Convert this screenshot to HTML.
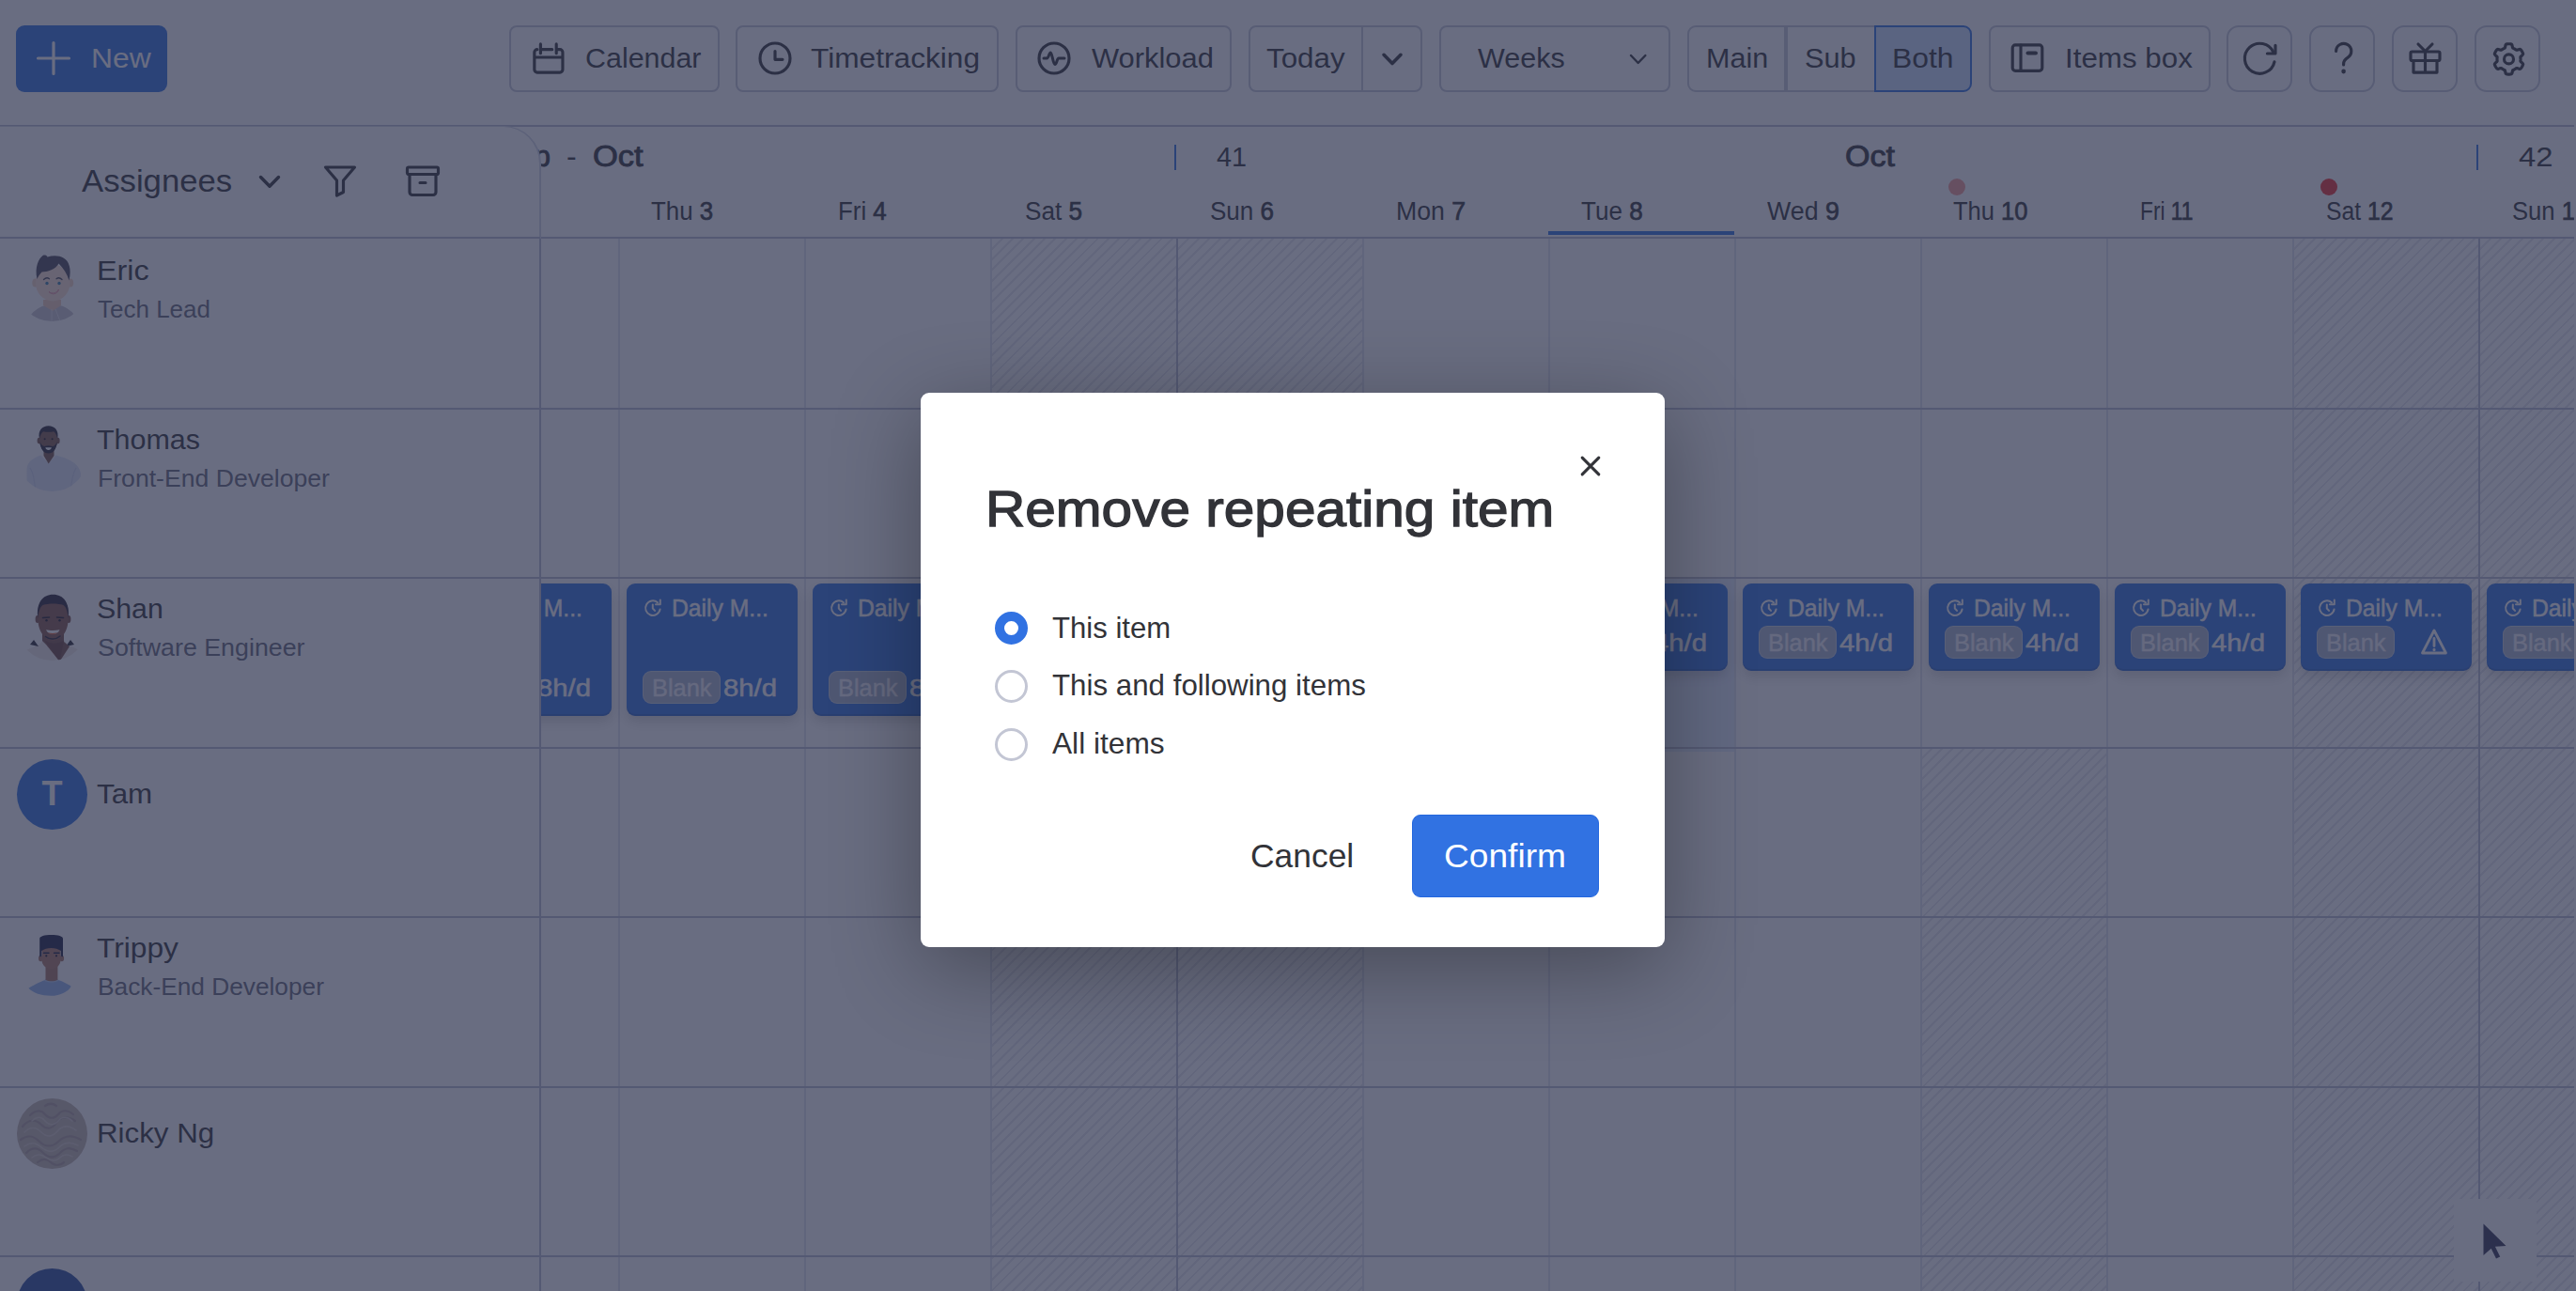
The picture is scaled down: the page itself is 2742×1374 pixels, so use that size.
<!DOCTYPE html>
<html lang="en"><head><meta charset="utf-8"><title>Remove repeating item</title>
<style>
*{box-sizing:border-box}
html,body{margin:0;padding:0}
html{overflow:hidden;background:#696d82}
@media (max-width:1400px){body{zoom:.5}}
body{width:2742px;height:1374px;overflow:hidden;background:#fff;position:relative;font-family:"Liberation Sans",sans-serif}
.t{position:absolute;line-height:1;white-space:nowrap;transform-origin:0 50%}
.ic{position:absolute;display:block;overflow:visible}
#topbar{position:absolute;left:0;top:0;width:2742px;height:135px;border-bottom:2px solid #b9bdcf;background:#fff}
#new{position:absolute;left:17px;top:27px;width:161px;height:71px;border-radius:9px;background:#3172e2}
.btn{position:absolute;top:27px;height:71px;border:2px solid #c5c8d6;border-radius:8px;background:#fff}
.vline{position:absolute}
#hdr{position:absolute;left:0;top:135px;width:2742px;height:119px;border-bottom:2px solid #b9bdcf;background:#fff}
#hdr .t{margin-top:-135px}
#hdr b{font-weight:400;-webkit-text-stroke:.7px #323338}
.tick{position:absolute;top:19px;width:2px;height:27px;background:#3172e2}
#today{position:absolute;left:1648px;top:110.500px;width:198px;height:4px;background:#3172e2}
.dot{position:absolute;top:55px;width:18px;height:18px;border-radius:50%}
#grid{position:absolute;left:0;top:0;width:2742px;height:1374px}
#grid .vl{position:absolute;top:254px;width:1.500px;height:1120px;background:#e2e4ed}
#grid .vl.wk{background:#b9bdcf;width:2px}
.hl{position:absolute;left:575px;width:2167px;height:2px;background:#b9bdcf}
.hatch{position:absolute;background:repeating-linear-gradient(135deg,#e6e8ef 0,#e6e8ef 2px,rgba(255,255,255,0) 2px,rgba(255,255,255,0) 8px)}
.ev{position:absolute;width:182px;border-radius:9px;background:#3172e2;box-shadow:0 6px 14px rgba(0,0,0,.16),inset 0 -2px 0 rgba(0,0,20,.12);overflow:hidden}
.tag{position:absolute;left:17.500px;width:83px;height:35px;border-radius:9px;background:rgba(196,196,200,.82);border:1px solid rgba(255,255,255,.35)}
#left{position:absolute;left:0;top:134px;width:576px;height:1241px;background:#fff;border-right:2px solid #d3d6e3;border-top:1px solid #d3d6e3;border-top-right-radius:40px}
#left .t,#left .ic,#left .hl,#left .av{margin-top:-135px}
.av{position:absolute;left:17.500px;width:75px;height:75px;border-radius:50%}
#cursorbox{position:absolute;left:2612px;top:1276px;width:88px;height:88px;background:#fff}
#rstrip{position:absolute;left:2740px;top:0;width:2px;height:1374px;background:#fff}
#ov{position:absolute;left:0;top:0;width:2742px;height:1374px;background:rgba(41,47,76,.7)}
#modal{position:absolute;left:980px;top:418px;width:792px;height:590px;background:#fff;border-radius:9px;box-shadow:0 22px 95px rgba(0,0,0,.33)}
.radio{position:absolute;width:35px;height:35px;border-radius:50%;border:3px solid #c3c6d4;background:#fff}
.radio.sel{border:10px solid #3172e2}
#confirm{position:absolute;left:523px;top:449px;width:199px;height:88px;border-radius:9px;background:#3172e2;border:1px solid #2367de}
</style></head>
<body>
<div id="topbar">
<div id="new"></div>
<svg class="ic" style="left:39px;top:44px" width="36" height="36" viewBox="0 0 36 36"><path d="M18 1.5v33M1.5 18h33" stroke="#fff" stroke-width="3.2" stroke-linecap="round" fill="none"/></svg>
<span class="t" style="left:97.1px;top:47.4px;font-size:30px;color:#fff;transform:scaleX(1.0605);">New</span>
<div class="btn" style="left:542px;width:224px;"></div>
<div class="btn" style="left:783px;width:280px;"></div>
<div class="btn" style="left:1081px;width:230px;"></div>
<div class="btn" style="left:1329px;width:185px;"></div>
<div class="vline" style="left:1449px;top:28px;height:69px;width:2px;background:#c5c8d6"></div>
<div class="btn" style="left:1532px;width:246px;"></div>
<div class="btn" style="left:1796px;width:105px;border-radius:9px 0 0 9px;"></div>
<div class="btn" style="left:1901px;width:96px;border-radius:0;"></div>
<div class="btn" style="left:1995px;width:104px;border-radius:0 9px 9px 0;border-color:#3172e2;background:#cce0ff;"></div>
<div class="btn" style="left:2117px;width:236px;"></div>
<div class="btn" style="left:2370px;width:70px;border-radius:13px;"></div>
<div class="btn" style="left:2458px;width:70px;border-radius:13px;"></div>
<div class="btn" style="left:2546px;width:70px;border-radius:13px;"></div>
<div class="btn" style="left:2634px;width:70px;border-radius:13px;"></div>
<span class="t" style="left:623.4px;top:47.2px;font-size:30px;color:#323338;transform:scaleX(1.0140);">Calendar</span>
<span class="t" style="left:863.4px;top:47.2px;font-size:30px;color:#323338;transform:scaleX(1.0554);">Timetracking</span>
<span class="t" style="left:1161.6px;top:47.2px;font-size:30px;color:#323338;transform:scaleX(1.0292);">Workload</span>
<span class="t" style="left:1347.5px;top:47.2px;font-size:30px;color:#323338;transform:scaleX(1.0449);">Today</span>
<span class="t" style="left:1572.7px;top:47.2px;font-size:30px;color:#323338;transform:scaleX(1.0165);">Weeks</span>
<span class="t" style="left:1815.7px;top:47.2px;font-size:30px;color:#323338;transform:scaleX(1.0188);">Main</span>
<span class="t" style="left:1920.5px;top:47.2px;font-size:30px;color:#323338;transform:scaleX(1.0238);">Sub</span>
<span class="t" style="left:2014.4px;top:47.2px;font-size:30px;color:#323338;transform:scaleX(1.0621);">Both</span>
<span class="t" style="left:2197.7px;top:47.2px;font-size:30px;color:#323338;transform:scaleX(1.0446);">Items box</span>
<svg class="ic" style="left:563px;top:41px" width="42" height="42" viewBox="0 0 42 42"><g stroke="#323338" fill="none" stroke-linecap="round" stroke-linejoin="round" stroke-width="3.15"><path d="M8.85 11.65a3 3 0 0 0-3 3v18.4a3 3 0 0 0 3 3h24.1a3 3 0 0 0 3-3v-18.4a3 3 0 0 0-3-3h-3.7M12.4 11.65h12.300M5.85 20h30.100M12.4 5.9v9.800M29.2 5.9v9.800"/></g></svg>
<svg class="ic" style="left:803.7px;top:40.7px" width="42" height="42" viewBox="0 0 42 42"><g stroke="#323338" fill="none" stroke-linecap="round" stroke-linejoin="round" stroke-width="3.15"><circle cx="21" cy="21" r="16"/><path d="M21 13.5V22.300h8"/></g></svg>
<svg class="ic" style="left:1101px;top:40.7px" width="42" height="42" viewBox="0 0 42 42"><g stroke="#323338" fill="none" stroke-linecap="round" stroke-linejoin="round" stroke-width="3.15"><circle cx="21" cy="21" r="16"/><path d="M10 21h3.5c1.8 0 2.2-6 3.8-6s2.700 12.500 4.600 12.500 2.200-6.500 4-6.500H32" stroke-width="3"/></g></svg>
<svg class="ic" style="left:1466px;top:50px" width="32" height="26" viewBox="0 0 32 26"><path d="M7 8.300l9 9.200 9-9.200" stroke="#323338" fill="none" stroke-linecap="round" stroke-linejoin="round" stroke-width="3.6"/></svg>
<svg class="ic" style="left:1728px;top:50px" width="32" height="26" viewBox="0 0 32 26"><path d="M8 9l7.700 8 7.700-8" stroke="#323338" fill="none" stroke-linecap="round" stroke-linejoin="round" stroke-width="2.4"/></svg>
<svg class="ic" style="left:2137px;top:41px" width="42" height="42" viewBox="0 0 42 42"><g stroke="#323338" fill="none" stroke-linecap="round" stroke-linejoin="round" stroke-width="3.15"><rect x="5.2" y="6.900" width="31.600" height="27.400" rx="3"/><path d="M14 7v27"/><path d="M21.500 15.500h8.500" stroke-width="4"/></g></svg>
<svg class="ic" style="left:2384px;top:41px" width="44" height="44" viewBox="0 0 44 44"><g stroke="#323338" fill="none" stroke-linecap="round" stroke-linejoin="round" stroke-width="3.15"><path d="M37 24.800A16 16 0 1 1 35.900 14.500"/><path d="M38 7.200v8.800h-8.600"/></g></svg>
<svg class="ic" style="left:2473px;top:41px" width="44" height="44" viewBox="0 0 44 44"><g stroke="#323338" fill="none" stroke-linecap="round" stroke-linejoin="round" stroke-width="3.15"><path d="M13.600 13.500a8.100 8.100 0 1 1 12.300 6.900c-2.700 1.700-4.300 3.200-4.300 6.600v1"/><path d="M21.600 34.800v.3" stroke-width="4.600"/></g></svg>
<svg class="ic" style="left:2560px;top:41px" width="42" height="42" viewBox="0 0 42 42"><g stroke="#323338" fill="none" stroke-linecap="round" stroke-linejoin="round" stroke-width="3.15"><rect x="6" y="14" width="31" height="9.500" rx="1.500"/><path d="M9 23.500v12.600h25V23.500M21.500 14v22M21.500 13.500l-7.500-7.500M21.500 13.500l7.500-7.500"/></g></svg>
<svg class="ic" style="left:2648px;top:41px" width="46" height="46" viewBox="0 0 46 46"><g stroke="#323338" fill="none" stroke-linecap="round" stroke-linejoin="round" stroke-width="3.15"><path d="M22.50 5.70 L23.21 5.72 L23.91 5.76 L24.61 5.84 L25.30 6.00 L25.86 6.74 L26.21 8.04 L26.46 9.34 L26.79 10.11 L27.28 10.35 L27.78 10.57 L28.27 10.81 L28.75 11.07 L29.22 11.36 L29.67 11.66 L30.11 11.98 L30.57 12.29 L31.40 12.19 L32.65 11.75 L33.95 11.41 L34.87 11.52 L35.35 12.04 L35.77 12.61 L36.16 13.20 L36.53 13.80 L36.87 14.42 L37.18 15.05 L37.47 15.70 L37.67 16.38 L37.31 17.23 L36.36 18.19 L35.36 19.05 L34.86 19.72 L34.89 20.27 L34.95 20.81 L34.99 21.35 L35.00 21.90 L34.99 22.45 L34.95 22.99 L34.89 23.53 L34.86 24.08 L35.36 24.75 L36.36 25.61 L37.31 26.57 L37.67 27.42 L37.47 28.10 L37.18 28.75 L36.87 29.38 L36.53 30.00 L36.16 30.60 L35.77 31.19 L35.35 31.76 L34.87 32.28 L33.95 32.39 L32.65 32.05 L31.40 31.61 L30.57 31.51 L30.11 31.82 L29.67 32.14 L29.22 32.44 L28.75 32.73 L28.27 32.99 L27.78 33.23 L27.28 33.45 L26.79 33.69 L26.46 34.46 L26.21 35.76 L25.86 37.06 L25.30 37.80 L24.61 37.96 L23.91 38.04 L23.21 38.08 L22.50 38.10 L21.79 38.08 L21.09 38.04 L20.39 37.96 L19.70 37.80 L19.14 37.06 L18.79 35.76 L18.54 34.46 L18.21 33.69 L17.72 33.45 L17.22 33.23 L16.73 32.99 L16.25 32.73 L15.78 32.44 L15.33 32.14 L14.89 31.82 L14.43 31.51 L13.60 31.61 L12.35 32.05 L11.05 32.39 L10.13 32.28 L9.65 31.76 L9.23 31.19 L8.84 30.60 L8.47 30.00 L8.13 29.38 L7.82 28.75 L7.53 28.10 L7.33 27.42 L7.69 26.57 L8.64 25.61 L9.64 24.75 L10.14 24.08 L10.11 23.53 L10.05 22.99 L10.01 22.45 L10.00 21.90 L10.01 21.35 L10.05 20.81 L10.11 20.27 L10.14 19.72 L9.64 19.05 L8.64 18.19 L7.69 17.23 L7.33 16.38 L7.53 15.70 L7.82 15.05 L8.13 14.42 L8.47 13.80 L8.84 13.20 L9.23 12.61 L9.65 12.04 L10.13 11.52 L11.05 11.41 L12.35 11.75 L13.60 12.19 L14.43 12.29 L14.89 11.98 L15.33 11.66 L15.78 11.36 L16.25 11.07 L16.73 10.81 L17.22 10.57 L17.72 10.35 L18.21 10.11 L18.54 9.34 L18.79 8.04 L19.14 6.74 L19.70 6.00 L20.39 5.84 L21.09 5.76 L21.79 5.72Z"/><circle cx="22.5" cy="21.900" r="5"/></g></svg>
</div>
<div id="hdr">
<span class="t" style="left:529.6px;top:150.4px;font-size:32px;color:#323338;transform:scaleX(0.9817);-webkit-text-stroke:0.9px #323338;">Sep</span>
<span class="t" style="left:603.0px;top:150.4px;font-size:32px;color:#323338;">-</span>
<span class="t" style="left:631.4px;top:150.4px;font-size:32px;color:#323338;transform:scaleX(1.0767);-webkit-text-stroke:0.9px #323338;">Oct</span>
<span class="t" style="left:1295.2px;top:152.1px;font-size:30px;color:#323338;transform:scaleX(0.9604);">41</span>
<span class="t" style="left:1963.6px;top:150.4px;font-size:32px;color:#323338;transform:scaleX(1.0647);-webkit-text-stroke:0.9px #323338;">Oct</span>
<span class="t" style="left:2681.2px;top:152.1px;font-size:30px;color:#323338;transform:scaleX(1.0923);">42</span>
<div class="tick" style="left:1250px"></div><div class="tick" style="left:2636px"></div>
<span class="t" style="left:693.2px;top:211.8px;font-size:26.8px;transform:scaleX(0.9645);color:#323338">Thu <b>3</b></span>
<span class="t" style="left:892px;top:211.8px;font-size:26.8px;transform:scaleX(0.9645);color:#323338">Fri <b>4</b></span>
<span class="t" style="left:1090.5px;top:211.8px;font-size:26.8px;transform:scaleX(0.9764);color:#323338">Sat <b>5</b></span>
<span class="t" style="left:1288px;top:211.8px;font-size:26.8px;transform:scaleX(0.9709);color:#323338">Sun <b>6</b></span>
<span class="t" style="left:1486.2px;top:211.8px;font-size:26.8px;transform:scaleX(0.9948);color:#323338">Mon <b>7</b></span>
<span class="t" style="left:1683.3px;top:211.8px;font-size:26.8px;transform:scaleX(0.9728);color:#323338">Tue <b>8</b></span>
<span class="t" style="left:1881px;top:211.8px;font-size:26.8px;transform:scaleX(1.0004);color:#323338">Wed <b>9</b></span>
<span class="t" style="left:2079px;top:211.8px;font-size:26.8px;transform:scaleX(0.9516);color:#323338">Thu <b>10</b></span>
<span class="t" style="left:2278.3px;top:211.8px;font-size:26.8px;transform:scaleX(0.8494);color:#323338">Fri <b>11</b></span>
<span class="t" style="left:2476.3px;top:211.8px;font-size:26.8px;transform:scaleX(0.9228);color:#323338">Sat <b>12</b></span>
<span class="t" style="left:2673.8px;top:211.8px;font-size:26.8px;transform:scaleX(0.9559);color:#323338">Sun <b>13</b></span>
<div id="today"></div>
<div class="dot" style="left:2074px;background:#f69a95"></div><div class="dot" style="left:2470px;background:#ee2f2f"></div>
</div>
<div id="grid">
<div class="hatch" style="left:1054px;top:254px;width:198px;height:1130px"></div>
<div class="hatch" style="left:1252px;top:254px;width:198px;height:1130px"></div>
<div class="hatch" style="left:2440px;top:254px;width:198px;height:1130px"></div>
<div class="hatch" style="left:2638px;top:254px;width:198px;height:1130px"></div>
<div class="hatch" style="left:2044px;top:796px;width:198px;height:600px"></div>
<div style="position:absolute;left:1649px;top:616px;width:197px;height:184px;background:#cfe0ff;opacity:.55"></div>
<div class="vl" style="left:658px"></div>
<div class="vl" style="left:856px"></div>
<div class="vl" style="left:1054px"></div>
<div class="vl wk" style="left:1252px"></div>
<div class="vl" style="left:1450px"></div>
<div class="vl" style="left:1648px"></div>
<div class="vl" style="left:1846px"></div>
<div class="vl" style="left:2044px"></div>
<div class="vl" style="left:2242px"></div>
<div class="vl" style="left:2440px"></div>
<div class="vl wk" style="left:2638px"></div>
<div class="hl" style="top:433.9px"></div>
<div class="hl" style="top:614.3px"></div>
<div class="hl" style="top:794.7px"></div>
<div class="hl" style="top:975.1px"></div>
<div class="hl" style="top:1155.5px"></div>
<div class="hl" style="top:1335.9px"></div>
<div class="hl" style="top:1516.3px"></div>
<div class="ev" style="left:468.5px;top:621px;height:140.5px"><svg class="ic" style="left:17px;top:15px" width="22" height="22" viewBox="0 0 22 22"><g stroke="#fff" stroke-width="2" fill="none" stroke-linecap="round" stroke-linejoin="round"><path d="M18.600 12.400a7.800 7.800 0 1 1-2.600-7.200"/><path d="M18.800 2.500v4.800h-4.800"/><path d="M10.800 7.500v4l2.200 2.400"/></g></svg><span class="t" style="left:48.3px;top:13.0px;font-size:26px;color:#fff;transform:scaleX(0.9502);-webkit-text-stroke:0.5px #fff;">Daily M...</span><div class="tag" style="top:93px"></div><span class="t" style="left:27.8px;top:97.5px;font-size:26px;color:#f0f1f7;transform:scaleX(0.9755);-webkit-text-stroke:0.4px #f0f1f7;">Blank</span><span class="t" style="left:103.8px;top:97.5px;font-size:26px;color:#fff;transform:scaleX(1.1254);-webkit-text-stroke:0.5px #fff;">8h/d</span></div>
<div class="ev" style="left:666.5px;top:621px;height:140.5px"><svg class="ic" style="left:17px;top:15px" width="22" height="22" viewBox="0 0 22 22"><g stroke="#fff" stroke-width="2" fill="none" stroke-linecap="round" stroke-linejoin="round"><path d="M18.600 12.400a7.800 7.800 0 1 1-2.600-7.200"/><path d="M18.800 2.500v4.800h-4.800"/><path d="M10.800 7.500v4l2.200 2.400"/></g></svg><span class="t" style="left:48.3px;top:13.0px;font-size:26px;color:#fff;transform:scaleX(0.9502);-webkit-text-stroke:0.5px #fff;">Daily M...</span><div class="tag" style="top:93px"></div><span class="t" style="left:27.8px;top:97.5px;font-size:26px;color:#f0f1f7;transform:scaleX(0.9755);-webkit-text-stroke:0.4px #f0f1f7;">Blank</span><span class="t" style="left:103.8px;top:97.5px;font-size:26px;color:#fff;transform:scaleX(1.1254);-webkit-text-stroke:0.5px #fff;">8h/d</span></div>
<div class="ev" style="left:864.5px;top:621px;height:140.5px"><svg class="ic" style="left:17px;top:15px" width="22" height="22" viewBox="0 0 22 22"><g stroke="#fff" stroke-width="2" fill="none" stroke-linecap="round" stroke-linejoin="round"><path d="M18.600 12.400a7.800 7.800 0 1 1-2.600-7.200"/><path d="M18.800 2.500v4.800h-4.800"/><path d="M10.800 7.500v4l2.200 2.400"/></g></svg><span class="t" style="left:48.3px;top:13.0px;font-size:26px;color:#fff;transform:scaleX(0.9502);-webkit-text-stroke:0.5px #fff;">Daily M...</span><div class="tag" style="top:93px"></div><span class="t" style="left:27.8px;top:97.5px;font-size:26px;color:#f0f1f7;transform:scaleX(0.9755);-webkit-text-stroke:0.4px #f0f1f7;">Blank</span><span class="t" style="left:103.8px;top:97.5px;font-size:26px;color:#fff;transform:scaleX(1.1254);-webkit-text-stroke:0.5px #fff;">8h/d</span></div>
<div class="ev" style="left:1062.5px;top:621px;height:140.5px"><svg class="ic" style="left:17px;top:15px" width="22" height="22" viewBox="0 0 22 22"><g stroke="#fff" stroke-width="2" fill="none" stroke-linecap="round" stroke-linejoin="round"><path d="M18.600 12.400a7.800 7.800 0 1 1-2.600-7.200"/><path d="M18.800 2.500v4.800h-4.800"/><path d="M10.800 7.500v4l2.200 2.400"/></g></svg><span class="t" style="left:48.3px;top:13.0px;font-size:26px;color:#fff;transform:scaleX(0.9502);-webkit-text-stroke:0.5px #fff;">Daily M...</span><div class="tag" style="top:93px"></div><span class="t" style="left:27.8px;top:97.5px;font-size:26px;color:#f0f1f7;transform:scaleX(0.9755);-webkit-text-stroke:0.4px #f0f1f7;">Blank</span><span class="t" style="left:103.8px;top:97.5px;font-size:26px;color:#fff;transform:scaleX(1.1254);-webkit-text-stroke:0.5px #fff;">8h/d</span></div>
<div class="ev" style="left:1656.5px;top:621px;height:92.5px"><svg class="ic" style="left:17px;top:15px" width="22" height="22" viewBox="0 0 22 22"><g stroke="#fff" stroke-width="2" fill="none" stroke-linecap="round" stroke-linejoin="round"><path d="M18.600 12.400a7.800 7.800 0 1 1-2.600-7.200"/><path d="M18.800 2.500v4.800h-4.800"/><path d="M10.800 7.500v4l2.200 2.400"/></g></svg><span class="t" style="left:48.3px;top:13.0px;font-size:26px;color:#fff;transform:scaleX(0.9502);-webkit-text-stroke:0.5px #fff;">Daily M...</span><div class="tag" style="top:45px"></div><span class="t" style="left:27.8px;top:49.5px;font-size:26px;color:#f0f1f7;transform:scaleX(0.9755);-webkit-text-stroke:0.4px #f0f1f7;">Blank</span><span class="t" style="left:103.8px;top:49.5px;font-size:26px;color:#fff;transform:scaleX(1.1254);-webkit-text-stroke:0.5px #fff;">4h/d</span></div>
<div class="ev" style="left:1854.5px;top:621px;height:92.5px"><svg class="ic" style="left:17px;top:15px" width="22" height="22" viewBox="0 0 22 22"><g stroke="#fff" stroke-width="2" fill="none" stroke-linecap="round" stroke-linejoin="round"><path d="M18.600 12.400a7.800 7.800 0 1 1-2.600-7.200"/><path d="M18.800 2.500v4.800h-4.800"/><path d="M10.800 7.500v4l2.200 2.400"/></g></svg><span class="t" style="left:48.3px;top:13.0px;font-size:26px;color:#fff;transform:scaleX(0.9502);-webkit-text-stroke:0.5px #fff;">Daily M...</span><div class="tag" style="top:45px"></div><span class="t" style="left:27.8px;top:49.5px;font-size:26px;color:#f0f1f7;transform:scaleX(0.9755);-webkit-text-stroke:0.4px #f0f1f7;">Blank</span><span class="t" style="left:103.8px;top:49.5px;font-size:26px;color:#fff;transform:scaleX(1.1254);-webkit-text-stroke:0.5px #fff;">4h/d</span></div>
<div class="ev" style="left:2052.5px;top:621px;height:92.5px"><svg class="ic" style="left:17px;top:15px" width="22" height="22" viewBox="0 0 22 22"><g stroke="#fff" stroke-width="2" fill="none" stroke-linecap="round" stroke-linejoin="round"><path d="M18.600 12.400a7.800 7.800 0 1 1-2.600-7.200"/><path d="M18.800 2.500v4.800h-4.800"/><path d="M10.800 7.500v4l2.200 2.400"/></g></svg><span class="t" style="left:48.3px;top:13.0px;font-size:26px;color:#fff;transform:scaleX(0.9502);-webkit-text-stroke:0.5px #fff;">Daily M...</span><div class="tag" style="top:45px"></div><span class="t" style="left:27.8px;top:49.5px;font-size:26px;color:#f0f1f7;transform:scaleX(0.9755);-webkit-text-stroke:0.4px #f0f1f7;">Blank</span><span class="t" style="left:103.8px;top:49.5px;font-size:26px;color:#fff;transform:scaleX(1.1254);-webkit-text-stroke:0.5px #fff;">4h/d</span></div>
<div class="ev" style="left:2250.5px;top:621px;height:92.5px"><svg class="ic" style="left:17px;top:15px" width="22" height="22" viewBox="0 0 22 22"><g stroke="#fff" stroke-width="2" fill="none" stroke-linecap="round" stroke-linejoin="round"><path d="M18.600 12.400a7.800 7.800 0 1 1-2.600-7.200"/><path d="M18.800 2.500v4.800h-4.800"/><path d="M10.800 7.500v4l2.200 2.400"/></g></svg><span class="t" style="left:48.3px;top:13.0px;font-size:26px;color:#fff;transform:scaleX(0.9502);-webkit-text-stroke:0.5px #fff;">Daily M...</span><div class="tag" style="top:45px"></div><span class="t" style="left:27.8px;top:49.5px;font-size:26px;color:#f0f1f7;transform:scaleX(0.9755);-webkit-text-stroke:0.4px #f0f1f7;">Blank</span><span class="t" style="left:103.8px;top:49.5px;font-size:26px;color:#fff;transform:scaleX(1.1254);-webkit-text-stroke:0.5px #fff;">4h/d</span></div>
<div class="ev" style="left:2448.5px;top:621px;height:92.5px"><svg class="ic" style="left:17px;top:15px" width="22" height="22" viewBox="0 0 22 22"><g stroke="#fff" stroke-width="2" fill="none" stroke-linecap="round" stroke-linejoin="round"><path d="M18.600 12.400a7.800 7.800 0 1 1-2.600-7.200"/><path d="M18.800 2.500v4.800h-4.800"/><path d="M10.800 7.500v4l2.200 2.400"/></g></svg><span class="t" style="left:48.3px;top:13.0px;font-size:26px;color:#fff;transform:scaleX(0.9502);-webkit-text-stroke:0.5px #fff;">Daily M...</span><div class="tag" style="top:45px"></div><span class="t" style="left:27.8px;top:49.5px;font-size:26px;color:#f0f1f7;transform:scaleX(0.9755);-webkit-text-stroke:0.4px #f0f1f7;">Blank</span><svg class="ic" style="left:125.5px;top:46px" width="34" height="32" viewBox="0 0 34 32"><g stroke="#fff" stroke-width="2.800" fill="none" stroke-linecap="round" stroke-linejoin="round"><path d="M17 4L29.500 28H4.500z"/><path d="M17 12.500v8"/><path d="M17 24.300v.4" stroke-width="3"/></g></svg></div>
<div class="ev" style="left:2646.5px;top:621px;height:92.5px"><svg class="ic" style="left:17px;top:15px" width="22" height="22" viewBox="0 0 22 22"><g stroke="#fff" stroke-width="2" fill="none" stroke-linecap="round" stroke-linejoin="round"><path d="M18.600 12.400a7.800 7.800 0 1 1-2.600-7.200"/><path d="M18.800 2.500v4.800h-4.800"/><path d="M10.800 7.500v4l2.200 2.400"/></g></svg><span class="t" style="left:48.3px;top:13.0px;font-size:26px;color:#fff;transform:scaleX(0.9502);-webkit-text-stroke:0.5px #fff;">Daily M...</span><div class="tag" style="top:45px"></div><span class="t" style="left:27.8px;top:49.5px;font-size:26px;color:#f0f1f7;transform:scaleX(0.9755);-webkit-text-stroke:0.4px #f0f1f7;">Blank</span><span class="t" style="left:103.8px;top:49.5px;font-size:26px;color:#fff;transform:scaleX(1.1254);-webkit-text-stroke:0.5px #fff;">4h/d</span></div>
</div>
<div id="left">
<span class="t" style="left:87.4px;top:176.8px;font-size:32.5px;color:#323338;transform:scaleX(1.0686);">Assignees</span>
<svg class="ic" style="left:270px;top:180px" width="34" height="28" viewBox="0 0 34 28"><path d="M7.500 8.500l9.500 9.700 9.500-9.700" stroke="#323338" fill="none" stroke-linecap="round" stroke-linejoin="round" stroke-width="3.4"/></svg>
<svg class="ic" style="left:340px;top:171px" width="44" height="44" viewBox="0 0 44 44"><path d="M6.500 7h31L25.500 21v12.500l-7 3.500V21z" stroke="#323338" fill="none" stroke-linecap="round" stroke-linejoin="round" stroke-width="3.15"/></svg>
<svg class="ic" style="left:428px;top:171px" width="44" height="44" viewBox="0 0 44 44"><g stroke="#323338" fill="none" stroke-linecap="round" stroke-linejoin="round" stroke-width="3.15"><rect x="5.500" y="7" width="33" height="7.500" rx="1.500"/><path d="M8 14.500v19a3 3 0 0 0 3 3h22a3 3 0 0 0 3-3v-19M19 23.500h6"/></g></svg>
<div class="hl" style="top:252.0px;left:0;width:575px"></div>
<div class="hl" style="top:433.9px;left:0;width:575px"></div>
<div class="hl" style="top:614.3px;left:0;width:575px"></div>
<div class="hl" style="top:794.7px;left:0;width:575px"></div>
<div class="hl" style="top:975.1px;left:0;width:575px"></div>
<div class="hl" style="top:1155.5px;left:0;width:575px"></div>
<div class="hl" style="top:1335.9px;left:0;width:575px"></div>
<div style="position:absolute;left:574px;top:119px;width:2px;height:1122px;background:#b9bdcf"></div>
<span class="t" style="left:102.7px;top:272.5px;font-size:30px;color:#323338;transform:scaleX(1.0790);">Eric</span><span class="t" style="left:104.0px;top:315.5px;font-size:26px;color:#676879;">Tech Lead</span>
<span class="t" style="left:102.7px;top:452.9px;font-size:30px;color:#323338;transform:scaleX(1.0155);">Thomas</span><span class="t" style="left:104.0px;top:495.9px;font-size:26px;color:#676879;transform:scaleX(1.0232);">Front-End Developer</span>
<span class="t" style="left:102.7px;top:633.3px;font-size:30px;color:#323338;transform:scaleX(1.0112);">Shan</span><span class="t" style="left:104.0px;top:676.3px;font-size:26px;color:#676879;transform:scaleX(1.0310);">Software Engineer</span>
<span class="t" style="left:102.7px;top:829.8px;font-size:30px;color:#323338;transform:scaleX(1.0454);">Tam</span>
<span class="t" style="left:102.7px;top:994.1px;font-size:30px;color:#323338;transform:scaleX(1.0573);">Trippy</span><span class="t" style="left:104.0px;top:1037.1px;font-size:26px;color:#676879;transform:scaleX(1.0104);">Back-End Developer</span>
<span class="t" style="left:102.7px;top:1190.6px;font-size:30px;color:#323338;transform:scaleX(1.0436);">Ricky Ng</span>
<svg class="ic" style="left:17.5px;top:267.1px" width="75" height="75" viewBox="0 0 75 75"><defs><clipPath id="cp0"><circle cx="37.5" cy="37.5" r="37.5"/></clipPath></defs><g clip-path="url(#cp0)"><ellipse cx="38" cy="84" rx="29" ry="27" fill="#c9c6cf"/><path d="M28 58l10 6 9-6v-6h-19z" fill="#f2cdb9"/><path d="M37 62v14M41 62l5 13" stroke="#e4e2ea" stroke-width="1" fill="none"/><ellipse cx="19.500" cy="34" rx="3.200" ry="4.500" fill="#f6d6c3"/><ellipse cx="57" cy="34" rx="3.200" ry="4.500" fill="#f6d6c3"/><ellipse cx="38.2" cy="34" rx="18.300" ry="19.500" fill="#fbe0d0"/><path d="M21.500 30c-3-13 2-22 6-25 2-1 4-.5 5 1.500 6-2 13-1.500 17 1 6 3 9 12 6 24-2-7-6-13-11-18-3 6-12 9-18 9-2 2-4 5-5 7.500z" fill="#4b4958"/><circle cx="32" cy="34.500" r="1.700" fill="#3f7fa8"/><circle cx="45" cy="34.500" r="1.700" fill="#3f7fa8"/><path d="M28.500 30.500c2-2 4.500-2 6-.8M42 29.700c1.500-1.200 4-1.200 6 .8" stroke="#4b4958" stroke-width="1.300" fill="none" stroke-linecap="round"/><path d="M34 43.500c3 2.500 8 2 10.500-2.500-1 5-7 6.500-10.500 2.500z" fill="#fff" stroke="#e58a98" stroke-width=".8"/></g></svg>
<svg class="ic" style="left:17.5px;top:447.5px" width="75" height="75" viewBox="0 0 75 75"><defs><clipPath id="cp1"><circle cx="37.5" cy="37.5" r="37.5"/></clipPath></defs><g clip-path="url(#cp1)"><path d="M10.500 76V52c0-9 8-13 15-15.500l8 8.500 8-8.500c8 2.500 26.700 6.500 26.700 22V76z" fill="#dfe6f7"/><path d="M14 50c4 6 5 14 6 26M63 50c-4 6-5 14-6 26" stroke="#cfd7ee" stroke-width="1.200" fill="none"/><path d="M28.500 29h11v8l-5.800 8.500-5.200-8.500z" fill="#7a5647"/><ellipse cx="23.600" cy="21" rx="2" ry="3.200" fill="#7a5647"/><ellipse cx="43.600" cy="21" rx="2" ry="3.200" fill="#7a5647"/><ellipse cx="33.600" cy="20" rx="9.800" ry="13.800" fill="#805a4a"/><path d="M24 19c-2-9 3-13.800 9.600-13.800S45 10 43.200 19c-1-4.500-2.500-7-4-7.800-3 .8-8 .8-11 0-1.800 1-3.200 3.500-4.200 7.800z" fill="#2a2633"/><path d="M24.500 22c.5 8 4 12.500 9.100 12.500S42.300 30 42.800 22c-1.500 3.500-3 4.800-5 5-2.500-1-6-1-8.400 0-2-.3-3.500-1.500-4.900-5z" fill="#2a2633"/><path d="M30.300 28.300h6.600c-.4 1.800-1.700 2.600-3.300 2.600s-2.900-.8-3.300-2.600z" fill="#fff"/><circle cx="29.600" cy="19.300" r="1" fill="#1b1820"/><circle cx="37.600" cy="19.300" r="1" fill="#1b1820"/></g></svg>
<svg class="ic" style="left:17.5px;top:627.9px" width="75" height="75" viewBox="0 0 75 75"><defs><clipPath id="cp2"><circle cx="37.5" cy="37.5" r="37.5"/></clipPath></defs><g clip-path="url(#cp2)"><path d="M0 76V68l24-10 8-10h14l8 10 21 10v8z" fill="#f1ebe6"/><path d="M14 58l4-5 5 7zM61 58l-4-5-5 7z" fill="#2b2a33"/><path d="M27 46h23v9l6 5-10.500 16L31 58l-4-4z" fill="#7a5046"/><path d="M27 50c3 6 12 8 18 6l5-2-4.500 22z" fill="#6d453d"/><ellipse cx="21.800" cy="31" rx="2.200" ry="4" fill="#7e5247"/><ellipse cx="55.200" cy="31" rx="2.200" ry="4" fill="#7e5247"/><path d="M22.500 22c0-9 7-14 16-14s16 5 16 14v10c0 12-8 22-16 22s-16-10-16-22z" fill="#85574b"/><path d="M22.300 30c-2-16 5-25.200 16.200-25.200S56.700 14 54.700 30c-.8-7-2.200-12-5.200-14-6-2-16-2-22 0-3 2-4.400 7-5.200 14z" fill="#2b2433"/><path d="M30.500 49.500c4 3.500 11 3.500 15.500-.5" stroke="#2b2433" stroke-width="1.600" fill="none" stroke-linecap="round"/><path d="M31 42.200c4 1 10 1 14.500 0-1 3-4 4.800-7.200 4.800s-6.300-1.800-7.300-4.800z" fill="#fff"/><path d="M33 45.300c3 .8 7 .8 10 0-1 1.500-3 2-5 2s-4-.5-5-2z" fill="#e0653a"/><path d="M27.500 29.500l7-.5M42.500 29l7 .5" stroke="#231d29" stroke-width="1.600" stroke-linecap="round"/><circle cx="31.500" cy="32.300" r="1.200" fill="#1d1822"/><circle cx="45.500" cy="32.300" r="1.200" fill="#1d1822"/></g></svg>
<svg class="ic" style="left:17.5px;top:988.7px" width="75" height="75" viewBox="0 0 75 75"><defs><clipPath id="cp4"><circle cx="37.5" cy="37.5" r="37.5"/></clipPath></defs><g clip-path="url(#cp4)"><path d="M12.400 62.800C20 58 28 54.500 31 53.700h12c4 .8 10 4 14.700 7-3 5.500-11 10.100-21.700 10.100-10 0-19-3-23.600-8z" fill="#93b5ee"/><path d="M29 54.500c4 2.800 11 2.800 15.500 0l-1.500-1.500h-12.500z" fill="#b5cdf5"/><path d="M30.500 38h12.900v15.700c-4 2-9 2-12.900 0z" fill="#a87563"/><ellipse cx="25.300" cy="31" rx="2.300" ry="3.300" fill="#a87563"/><ellipse cx="47.800" cy="31" rx="2.300" ry="3.300" fill="#a87563"/><path d="M26.500 17h20v16c0 5-4.500 9-10 9s-10-4-10-9z" fill="#ae7a66"/><path d="M24.200 29.500V10c0-2.500 5-4 12.400-4S49 7.500 49 10v19.500l-2.200-1V23c-3-2-6-3-10.300-3s-7.300 1-10.200 3v5.500z" fill="#1d2140"/><path d="M28.500 25.300h5.500M39.500 25.300h5.500" stroke="#1d2140" stroke-width="1.500" stroke-linecap="round"/><circle cx="31.300" cy="28.300" r="1.100" fill="#14152a"/><circle cx="42" cy="28.300" r="1.100" fill="#14152a"/></g></svg>
<div class="av" style="top:808.3px;background:#3172e2"></div>
<span class="t" style="left:44.5px;top:827.2px;font-size:36px;color:#fff;font-weight:700;">T</span>
<svg class="ic" style="left:17.5px;top:1169.1px" width="75" height="75" viewBox="0 0 75 75"><defs><clipPath id="cp5"><circle cx="37.5" cy="37.5" r="37.5"/></clipPath></defs><g clip-path="url(#cp5)"><rect width="75" height="75" fill="#c3b7b0"/><g fill="none" stroke="#a8999a" stroke-width="2.200" stroke-linecap="round" opacity=".8"><path d="M6 30c6-8 14-8 20-2s12 4 16-2 12-8 20-2"/><path d="M4 44c8-6 14-4 20 2s14 6 20 0 14-8 24-2"/><path d="M10 58c6-6 12-6 18 0s12 6 18 0 10-6 18-2"/><path d="M14 18c6-6 12-6 16-1s10 5 14 0 10-5 16 0"/><path d="M22 68c5-4 10-4 14 0s10 4 14 0"/><path d="M30 8c4-3 8-3 12 0"/></g><g fill="none" stroke="#d8cfca" stroke-width="1.600" stroke-linecap="round" opacity=".8"><path d="M8 36c6-6 12-6 18 0s12 5 17-1 12-7 20-1"/><path d="M8 51c7-5 12-4 18 1s13 6 19 0 12-6 20-2"/><path d="M16 24c5-5 10-5 14 0s10 5 14 0 10-5 15 0"/><path d="M16 63c5-4 10-4 15 0s11 4 15 0 8-4 13-1"/></g></g></svg>
<div class="av" style="top:1349.5px;background:#2b4f9e"></div>
</div>
<div id="cursorbox"><svg width="88" height="88" viewBox="0 0 88 88"><path d="M31.500 26.500v33.500l8.200-7.300 5.300 10.800 4.200-2-5.300-10.800 11.600-.7z" fill="#323353"/></svg></div>
<div id="rstrip"></div>
<div id="ov"></div>
<div id="modal">
<span class="t" style="left:69.3px;top:97.1px;font-size:53px;color:#323338;transform:scaleX(1.1046);-webkit-text-stroke:1.3px #323338;">Remove repeating item</span>
<svg class="ic" style="left:696.8px;top:62.39999999999998px" width="32" height="32" viewBox="0 0 32 32"><path d="M7.200 7.200l17.600 17.600M24.800 7.200L7.200 24.800" stroke="#323338" stroke-width="3.100" stroke-linecap="round"/></svg>
<div class="radio sel" style="left:79px;top:233.2px"></div>
<span class="t" style="left:139.6px;top:234.5px;font-size:31.5px;color:#323338;transform:scaleX(0.9874);">This item</span>
<div class="radio" style="left:79px;top:295.0px"></div>
<span class="t" style="left:139.6px;top:296.3px;font-size:31.5px;color:#323338;transform:scaleX(0.9932);">This and following items</span>
<div class="radio" style="left:79px;top:356.8px"></div>
<span class="t" style="left:139.6px;top:358.1px;font-size:31.5px;color:#323338;transform:scaleX(1.0054);">All items</span>
<span class="t" style="left:351.3px;top:475.6px;font-size:34.5px;color:#323338;transform:scaleX(1.0260);">Cancel</span>
<div id="confirm"></div>
<span class="t" style="left:557.0px;top:475.6px;font-size:34.5px;color:#fff;transform:scaleX(1.0763);">Confirm</span>
</div>
</body></html>
